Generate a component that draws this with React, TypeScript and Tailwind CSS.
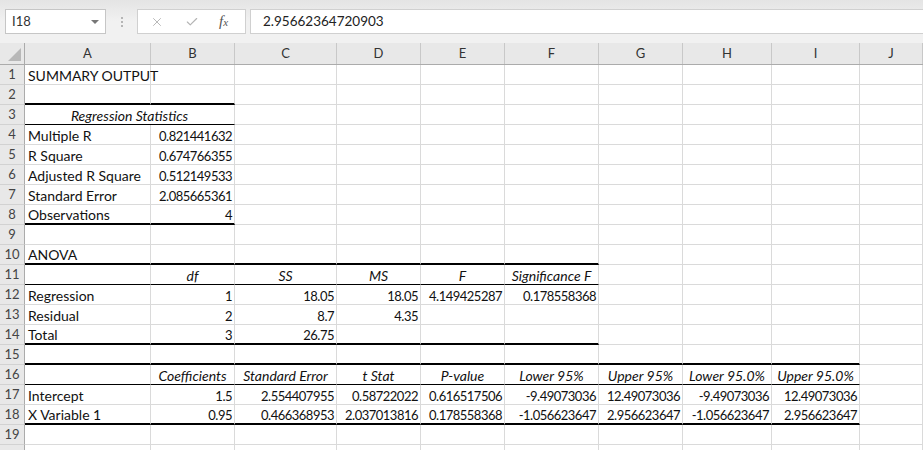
import { X, Check } from 'lucide-react';

type Cell = { t: string; a?: 'l' | 'r' | 'c'; i?: boolean; span?: number };

const COLS = ['A', 'B', 'C', 'D', 'E', 'F', 'G', 'H', 'I', 'J'];

const L = (t: string): Cell => ({ t, a: 'l' });
const R = (t: string): Cell => ({ t, a: 'r' });
const H = (t: string): Cell => ({ t, a: 'c', i: true });
const E: Cell = { t: '' };

// row number -> cells A..J (missing ones are blank)
const rows: Record<number, Cell[]> = {
  1: [L('SUMMARY OUTPUT')],
  3: [{ t: 'Regression Statistics', a: 'c', i: true, span: 2 }],
  4: [L('Multiple R'), R('0.821441632')],
  5: [L('R Square'), R('0.674766355')],
  6: [L('Adjusted R Square'), R('0.512149533')],
  7: [L('Standard Error'), R('2.085665361')],
  8: [L('Observations'), R('4')],
  10: [L('ANOVA')],
  11: [E, H('df'), H('SS'), H('MS'), H('F'), H('Significance F')],
  12: [L('Regression'), R('1'), R('18.05'), R('18.05'), R('4.149425287'), R('0.178558368')],
  13: [L('Residual'), R('2'), R('8.7'), R('4.35')],
  14: [L('Total'), R('3'), R('26.75')],
  16: [E, H('Coefficients'), H('Standard Error'), H('t Stat'), H('P-value'), H('Lower 95%'), H('Upper 95%'), H('Lower 95.0%'), H('Upper 95.0%')],
  17: [L('Intercept'), R('1.5'), R('2.554407955'), R('0.58722022'), R('0.616517506'), R('-9.49073036'), R('12.49073036'), R('-9.49073036'), R('12.49073036')],
  18: [L('X Variable 1'), R('0.95'), R('0.466368953'), R('2.037013816'), R('0.178558368'), R('-1.056623647'), R('2.956623647'), R('-1.056623647'), R('2.956623647')],
};

// bottom border per row: [last column index covered, kind]
const edges: Record<number, [number, 'thick' | 'thin']> = {
  2: [1, 'thick'],
  3: [1, 'thin'],
  8: [1, 'thick'],
  10: [5, 'thick'],
  11: [5, 'thin'],
  14: [5, 'thick'],
  15: [8, 'thick'],
  16: [8, 'thin'],
  18: [8, 'thick'],
};

function bottomClass(row: number, col: number) {
  const e = edges[row];
  if (e && col <= e[0]) {
    return e[1] === 'thick' ? 'border-b-2 border-b-black' : 'border-b border-b-black';
  }
  return 'border-b border-b-[#dadada]';
}

function Row({ n, label = true }: { n: number; label?: boolean }) {
  const cells = rows[n] ?? [];
  const out = [];
  let col = 0;
  while (col < COLS.length) {
    const c = cells[col] ?? E;
    const span = c.span ?? 1;
    const align =
      c.a === 'r'
        ? 'justify-end pr-[2px] text-[13px] tracking-[-0.5px]'
        : c.a === 'c'
          ? 'justify-center'
          : 'justify-start pl-[3px]';
    out.push(
      <div
        key={col}
        className={`flex items-end pb-[1px] whitespace-nowrap border-r border-r-[#dadada] ${bottomClass(n, col)} ${align} ${c.i ? 'italic' : ''} ${span === 2 ? 'col-span-2' : ''}`}
      >
        {c.t}
      </div>,
    );
    col += span;
  }
  return (
    <>
      <div className="flex items-center justify-center bg-[#e8e8e8] border-r border-r-[#ababab] border-b border-b-[#d2d2d2] text-[#444] text-[13px]">
        {label ? n : ''}
      </div>
      {out}
    </>
  );
}

export default function App() {
  const grid = 'grid grid-cols-[25px_126px_84px_102px_84px_84px_94px_84px_89px_88px_1fr]';
  return (
    <div
      className="w-[923px] h-[450px] overflow-hidden bg-white text-[#111]"
      style={{ fontFamily: 'Lato, "Open Sans", sans-serif' }}
    >
      {/* formula bar */}
      <div className="h-[43px] bg-gradient-to-b from-[#e4e4e4] via-[#f1f1f1] to-[#f1f1f1] flex items-start pt-[9px] pl-[5px]">
        <div className="w-[101px] h-[25px] bg-white border border-[#c6c6c6] flex items-center px-[6px] text-[13px] text-[#333]">
          <span className="flex-1">I18</span>
          <span className="w-0 h-0 border-l-[4px] border-r-[4px] border-t-[4px] border-l-transparent border-r-transparent border-t-[#777]" />
        </div>
        <div className="w-[31px] h-[25px] flex flex-col items-center justify-center gap-[2px]">
          <span className="w-[2px] h-[2px] bg-[#b5b5b5]" />
          <span className="w-[2px] h-[2px] bg-[#b5b5b5]" />
          <span className="w-[2px] h-[2px] bg-[#b5b5b5]" />
        </div>
        <div className="w-[109px] h-[25px] bg-white border border-[#d0d0d0] flex items-center">
          <X className="ml-[12px] w-[14px] h-[14px] text-[#b4b4b4]" strokeWidth={1.6} />
          <Check className="ml-[21px] w-[14px] h-[14px] text-[#b4b4b4]" strokeWidth={2} />
          <span
            className="ml-[20px] italic text-[15px] text-[#555] leading-none"
            style={{ fontFamily: '"Liberation Serif", serif' }}
          >
            f<span className="text-[11px]">x</span>
          </span>
        </div>
        <div className="ml-[4px] flex-1 h-[25px] bg-white border border-[#d0d0d0] border-r-0 flex items-center pl-[12px] text-[13.5px] text-[#222]">
          2.95662364720903
        </div>
      </div>

      {/* column headers */}
      <div className={`${grid} h-[22px] bg-[#e8e8e8] border-b border-b-[#ababab]`}>
        <div className="relative border-r border-r-[#ababab]">
          <span className="absolute right-[3px] bottom-[3px] w-0 h-0 border-b-[13px] border-l-[13px] border-b-[#b8b8b8] border-l-transparent" />
        </div>
        {COLS.map((c) => (
          <div key={c} className="flex items-center justify-center border-r border-r-[#c8c8c8] text-[13px] text-[#333]">
            {c}
          </div>
        ))}
      </div>

      {/* cells */}
      <div className={`${grid} auto-rows-[20px] text-[14px] leading-none`}>
        {Array.from({ length: 19 }, (_, i) => (
          <Row key={i} n={i + 1} />
        ))}
        <Row n={20} label={false} />
      </div>
    </div>
  );
}
